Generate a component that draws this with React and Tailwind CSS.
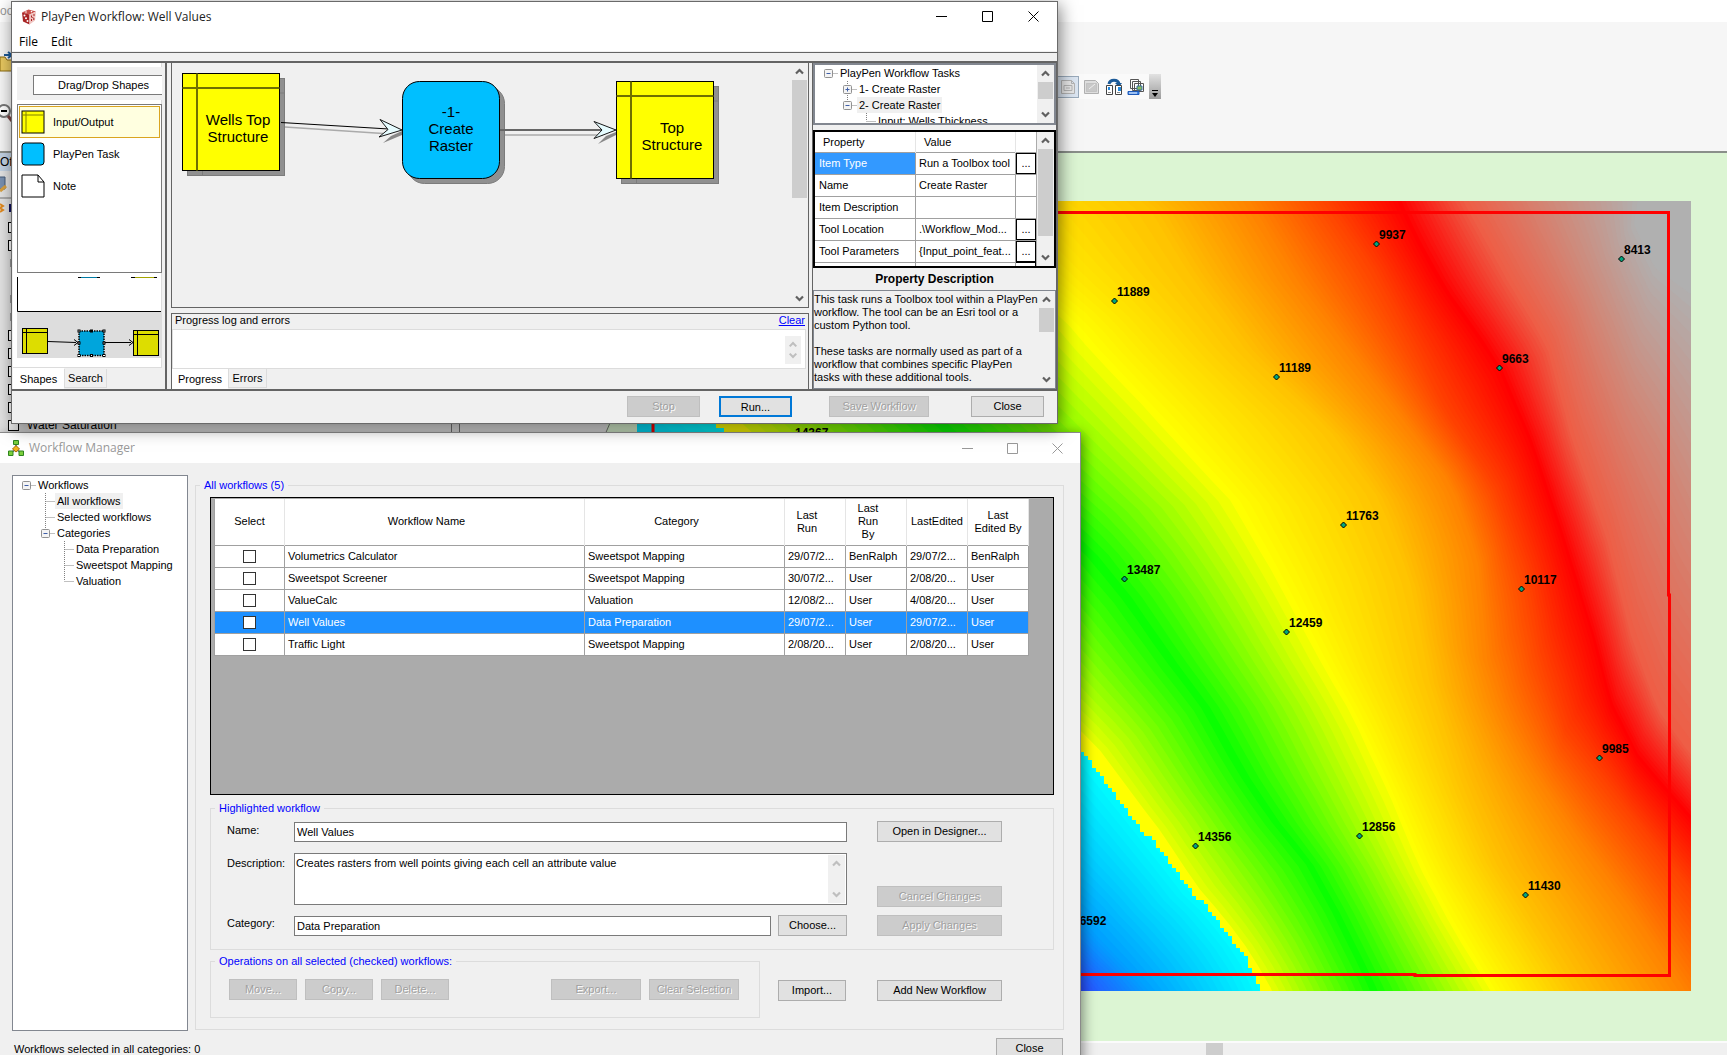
import { useState } from 'react'

/* ---------- shared controls ---------- */

const button = 'h-[21px] border border-[#adadad] bg-[#e1e1e1] leading-[17px] text-black disabled:border-[#bfbfbf] disabled:bg-[#cccccc] disabled:text-[#a0a0a0] disabled:[text-shadow:1px_1px_0_#fff]'

function Button({ className = '', ...props }) {
  return <button type="button" className={`${button} ${className}`} {...props} />
}

function Chevron({ up, muted }) {
  return (
    <svg className="h-[17px] w-full shrink-0" viewBox="0 0 17 17" fill="none" stroke={muted ? '#bfbfbf' : '#606060'} strokeWidth="2.2">
      <path d={up ? 'M5 10.5l3.5-3.5 3.5 3.5' : 'M5 6.5l3.5 3.5 3.5-3.5'} />
    </svg>
  )
}

function ScrollBar({ thumb, muted }) {
  return (
    <div className="flex w-[17px] shrink-0 flex-col justify-between bg-[#f0f0f0]">
      <div>
        <Chevron up muted={muted} />
        {thumb && <div className={`mx-px bg-[#cdcdcd] ${thumb}`} />}
      </div>
      <Chevron muted={muted} />
    </div>
  )
}

function WindowButtons({ color, gap }) {
  return (
    <div className={`flex ${gap}`}>
      <button type="button" aria-label="Minimize">
        <svg className="size-[11px]" viewBox="0 0 11 11" stroke={color} fill="none"><path d="M0 5.5h11" /></svg>
      </button>
      <button type="button" aria-label="Maximize">
        <svg className="size-[11px]" viewBox="0 0 11 11" stroke={color} fill="none"><path d="M.5 .5h10v10h-10z" /></svg>
      </button>
      <button type="button" aria-label="Close window">
        <svg className="size-[11px]" viewBox="0 0 11 11" stroke={color} fill="none"><path d="M.5 .5l10 10M10.5 .5l-10 10" /></svg>
      </button>
    </div>
  )
}

function Tree({ items }) {
  return (
    <ul className="min-w-0 flex-1 overflow-hidden">
      {items.map((item) => {
        const c = 13.5 + 19 * item.depth
        const w = 23 + 19 * item.depth
        return (
          <li key={item.label} className="flex h-4 items-center whitespace-nowrap">
            <svg className="shrink-0" width={w} height="16" viewBox={`0 0 ${w} 16`} fill="none">
              <g stroke="#808080" strokeDasharray="1 1">
                <path d={`M${c} 8.5h10`} />
                {item.depth > 0 && <path d={`M${c} 0v8`} />}
                {item.more && <path d={`M${c} 8v8`} />}
              </g>
              {item.toggle && (
                <>
                  <rect x={c - 4} y="4.5" width="8" height="8" rx="1" fill="#f4f4f4" stroke="#919191" />
                  <path d={`M${c - 2} 8.5h4`} stroke="#3f5fa8" />
                  {item.toggle === '+' && <path d={`M${c} 6.5v4`} stroke="#3f5fa8" />}
                </>
              )}
            </svg>
            <span className={`px-0.5 leading-4 ${item.active ? 'bg-[#f0f0f0]' : ''}`}>{item.label}</span>
          </li>
        )
      })}
    </ul>
  )
}

/* ---------- map ---------- */

// Contours run from the upper left to the lower right, deepest first
const CONTOURS = [
  { color: [42, 80, 255], points: [[600, 700], [900, 850], [1070, 975], [1095, 1010]] },
  { color: [0, 162, 255], points: [[600, 560], [900, 770], [1080, 918], [1150, 992], [1160, 1010]] },
  { color: [0, 255, 255], points: [[600, 330], [713, 424], [880, 572], [1081, 752], [1145, 834], [1196, 901], [1209, 910], [1243, 954], [1262, 996], [1266, 1010]] },
  { color: [255, 255, 0], points: [[600, 329], [713, 423], [880, 571], [1081, 751], [1145, 833], [1190, 901], [1203, 912], [1237, 954], [1261, 996], [1266, 1010]], hard: true },
  { color: [10, 255, 0], points: [[690, 190], [933, 424], [1080, 548], [1124, 601], [1162, 656], [1200, 706], [1238, 773], [1270, 820], [1305, 863], [1332, 912], [1357, 963], [1370, 990], [1378, 1010]] },
  { color: [255, 255, 0], points: [[880, 185], [1060, 315], [1090, 350], [1145, 408], [1188, 455], [1230, 500], [1275, 577], [1317, 655], [1353, 718], [1388, 792], [1420, 868], [1450, 924], [1490, 990], [1502, 1010]] },
  { color: [255, 192, 0], points: [[1110, 180], [1145, 201], [1190, 275], [1250, 355], [1330, 430], [1380, 500], [1410, 580], [1430, 683], [1463, 787], [1495, 862], [1535, 925], [1575, 990], [1588, 1010]] },
  { color: [255, 128, 0], points: [[1238, 180], [1250, 201], [1297, 280], [1347, 347], [1403, 420], [1452, 485], [1478, 560], [1487, 660], [1505, 717], [1530, 765], [1580, 840], [1632, 910], [1685, 990], [1698, 1010]] },
  { color: [255, 64, 0], points: [[1316, 180], [1327, 201], [1370, 263], [1417, 353], [1445, 410], [1495, 485], [1528, 580], [1541, 655], [1565, 730], [1600, 775], [1647, 835], [1700, 900], [1710, 912]] },
  { color: [255, 0, 0], points: [[1388, 180], [1397, 201], [1417, 243], [1443, 290], [1477, 337], [1500, 373], [1530, 443], [1557, 523], [1593, 640], [1610, 705], [1637, 758], [1691, 820], [1710, 842]] },
  { color: [238, 94, 70], points: [[1452, 180], [1463, 201], [1507, 280], [1547, 347], [1572, 440], [1607, 540], [1632, 640], [1658, 710], [1691, 755], [1710, 778]] },
  { color: [208, 136, 120], points: [[1535, 180], [1547, 201], [1590, 300], [1630, 400], [1667, 465], [1691, 515], [1710, 550]] },
  { color: [176, 176, 176], points: [[1640, 180], [1634, 225], [1655, 268], [1710, 308]] },
]

const SAMPLES = 40
const STEPS = 16

function resample(points) {
  const lengths = [0]
  for (let i = 1; i < points.length; i++) {
    lengths.push(lengths[i - 1] + Math.hypot(points[i][0] - points[i - 1][0], points[i][1] - points[i - 1][1]))
  }
  const total = lengths[lengths.length - 1]
  const out = []
  let seg = 1
  for (let s = 0; s <= SAMPLES; s++) {
    const d = (total * s) / SAMPLES
    while (seg < points.length - 1 && lengths[seg] < d) seg++
    const t = (d - lengths[seg - 1]) / (lengths[seg] - lengths[seg - 1])
    out.push([0, 1].map((k) => points[seg - 1][k] + (points[seg][k] - points[seg - 1][k]) * t))
  }
  return out
}

// raster cells are 4px, so the fault edge comes out as stairs
function stairs(points) {
  const out = []
  for (let i = 1; i < points.length; i++) {
    const [x0, y0] = points[i - 1]
    const [x1, y1] = points[i]
    const n = Math.max(1, Math.round((y1 - y0) / 4))
    for (let j = 0; j < n; j++) {
      const x = Math.round((x0 + ((x1 - x0) * j) / n) / 4) * 4
      const y = Math.round((y0 + ((y1 - y0) * j) / n) / 4) * 4
      if (out.length) out.push([x, out[out.length - 1][1]])
      out.push([x, y])
    }
  }
  return out
}

const mix = (a, b, t) => a.map((v, k) => v + (b[k] - v) * t)

function area(line) {
  const first = line[0]
  const last = line[line.length - 1]
  return [...line, [1900, last[1]], [1900, 100], [first[0], 100]]
    .map(([x, y]) => `${Math.round(x * 2) / 2},${Math.round(y * 2) / 2}`)
    .join(' ')
}

function buildBands() {
  const bands = []
  CONTOURS.forEach((contour, i) => {
    if (i === 0) return
    if (contour.hard) {
      bands.push({ fill: 'rgb(255,255,0)', points: area(stairs(CONTOURS[i - 1].points)) })
      return
    }
    const prev = CONTOURS[i - 1]
    const a = resample(prev.points)
    const b = resample(contour.points)
    for (let s = prev.hard ? 2 : 1; s <= STEPS; s++) {
      const t = s / STEPS
      const [r, g, bl] = mix(prev.color, contour.color, t).map(Math.round)
      bands.push({ fill: `rgb(${r},${g},${bl})`, points: area(a.map((p, k) => mix(p, b[k], t))) })
    }
  })
  return bands
}

const BANDS = buildBands()

const WELLS = [
  [792, 442, '14367'], [1114, 301, '11889'], [1376, 244, '9937'], [1621, 259, '8413'],
  [1499, 368, '9663'], [1276, 377, '11189'], [1343, 525, '11763'], [1124, 579, '13487'],
  [1521, 589, '10117'], [1286, 632, '12459'], [1599, 758, '9985'], [1195, 846, '14356'],
  [1359, 836, '12856'], [1525, 895, '11430'], [1070, 930, '16592'],
]

function DepthMap() {
  return (
    <svg className="block h-[790px] w-[1054px] shrink-0" viewBox="637 201 1054 790">
      <rect x="637" y="201" width="1054" height="790" fill="rgb(42,80,255)" />
      {BANDS.map((band, i) => <polygon key={i} points={band.points} fill={band.fill} />)}
      <path d="M653 212.500H1668.500V595H1669.500V975.500H1415V974.500H653Z" fill="none" stroke="#ff0000" strokeWidth="3" />
      {WELLS.map(([x, y, depth]) => (
        <g key={depth}>
          <path d={`M${x - 2.5} ${y}l3-3 3 3-3 3z`} fill="#00a57c" stroke="#000" />
          <text x={x + 3} y={y - 5} className="font-['Liberation_Sans',sans-serif] text-[12px] font-bold">{depth}</text>
        </g>
      ))}
    </svg>
  )
}

function MapToolbar() {
  return (
    <div className="flex h-[25px] items-center gap-1 bg-[#fafafa]">
      <button type="button" aria-label="Fixed zoom out" className="border border-[#9ab] bg-[#dce6f2] p-px">
        <svg className="size-[18px]" viewBox="0 0 18 18" fill="#e8e8e8" stroke="#b4b4b4"><path d="M2.500 2.500h10l3 3v10h-13zM12.500 2.500v3h3" /><path d="M5 7.500h8v5H5zM7 10h4" /></svg>
      </button>
      <button type="button" aria-label="Select extent">
        <svg className="size-[18px]" viewBox="0 0 18 18" fill="#dedede" stroke="#b0b0b0"><path d="M1.500 2.500h11l3 3v10h-14z" /><path d="M3.500 5.500h10v8h-10z" strokeDasharray="1 1" fill="#c8c8c8" /><path d="M6 11l6-5" stroke="#eee" /></svg>
      </button>
      <button type="button" aria-label="Swap layouts">
        <svg className="size-[18px]" viewBox="0 0 18 18" fill="none">
          <path d="M4 6c1-5 9-5 10 0" stroke="#1c5a98" strokeWidth="3" /><path d="M10 5h7l-3 4z" fill="#1c5a98" />
          <path d="M1.500 7.500h6v9h-6zM10.500 7.500h6v9h-6z" fill="#fff" stroke="#444" />
          <path d="M3 9h2v3H3zM13 9h3v4h-3z" fill="#2288dd" /><path d="M3 14.500h3M12 14.500h3" stroke="#888" />
        </svg>
      </button>
      <button type="button" aria-label="Data driven pages">
        <svg className="size-[18px]" viewBox="0 0 18 18" fill="#fff" stroke="#555">
          <path d="M3.500 1.500h8v9h-8zM5.500 3.500h8v9h-8zM7.500 5.500h9v8h-9z" /><path d="M10 8h5v4h-5z" fill="#8abf5a" stroke="#3a6ea5" /><path d="M1 13.500h11v3H1z" fill="#3c84e8" stroke="#1c58b8" /><path d="M3 14v2M5 14v2M7 14v2M9 14v2" stroke="#fff" />
        </svg>
      </button>
      <button type="button" aria-label="Toolbar options" className="h-[25px] w-3 bg-linear-to-b from-[#e2e2e2] to-[#9c9c9c]">
        <svg className="mt-3 w-3" viewBox="0 0 12 10"><path d="M3 2h6v1H3zM3 5h6l-3 4z" fill="#000" /></svg>
      </button>
    </div>
  )
}

const LAYER_ROWS = ['box', 'box', 'bit', '', 'bit', 'bit', 'box', 'box', 'box', 'box', 'box']

function Backdrop() {
  return (
    <div className="flex h-full flex-col bg-[#f6f6f6]">
      <header className="flex h-[153px] shrink-0 flex-col border-b-2 border-[#8a8f8a]">
        <div className="h-[22px] w-full bg-white text-[12px] leading-[22px] text-[#999]">oo</div>
        <div className="flex grow items-center gap-[1045px]">
          <svg className="h-24 w-3 shrink-0" viewBox="0 0 12 96">
            <path d="M0 18h5l2 3h5v11H0z" fill="#e8c860" stroke="#8a6a10" /><path d="M4 16h7M8 13l4 3-4 3" stroke="#1c5a98" fill="none" strokeWidth="2" />
            <circle cx="4" cy="72" r="6" fill="#fff" stroke="#777" strokeWidth="2" /><path d="M1 72h6" stroke="#000" strokeWidth="2" /><path d="M8 77l4 5" stroke="#7a4040" strokeWidth="3" />
          </svg>
          <MapToolbar />
        </div>
      </header>
      <div className="flex min-h-0 grow">
        <aside className="w-[452px] shrink-0 border-r border-[#777] bg-[#e3e3e3]">
          <div className="h-[18px] bg-[#c3d3e4] text-[12px] leading-[18px]">Of</div>
          <svg className="h-[47px] w-3" viewBox="0 0 12 47">
            <path d="M-5 6h10v12h-10z" fill="#7890b0" stroke="#445a78" /><path d="M0 20l6-5" stroke="#d8a040" strokeWidth="3" />
            <path d="M0 27h12" stroke="#777" /><path d="M0 33l3 2-3 2 3 2-3 2" stroke="#e08a20" strokeWidth="2" fill="none" /><path d="M9 33h2v8h-2z" fill="#101060" />
          </svg>
          {LAYER_ROWS.map((kind, i) => (
            <div key={i} className="flex h-[18px] items-center pl-2">
              {kind === 'box' && <span className="size-[11px] border border-black bg-white" />}
              {kind === 'bit' && <span className="ml-0.5 h-2 w-1 bg-[#999]" />}
            </div>
          ))}
          <label className="flex h-[18px] items-center gap-2 pl-2 text-[12px]">
            <input type="checkbox" className="size-[11px] appearance-none border border-black bg-white" />
            Water Saturation
          </label>
        </aside>
        <div className="flex min-w-0 grow flex-col">
          <div className="flex min-h-0 grow bg-[#dcf5d3]">
            <svg className="h-full w-[185px] shrink-0" viewBox="0 0 185 888" preserveAspectRatio="none">
              <path d="M0 0h8v888H0z" fill="#e3e3e3" /><path d="M8 0h190L154 280 120 360H8z" fill="#e3e3e3" /><path d="M7.500 0v888M158 270l-6 14" stroke="#777" />
            </svg>
            <div className="pt-12"><DepthMap /></div>
          </div>
          <div className="flex h-[14px] shrink-0 border-t-2 border-[#fbfbfb] bg-[#f0f0f0] pl-[754px]">
            <div className="w-[17px] bg-[#cdcdcd]" />
          </div>
        </div>
      </div>
    </div>
  )
}

/* ---------- workflow designer ---------- */

function DieIcon() {
  return (
    <svg className="size-4" viewBox="0 0 16 16">
      <path d="M7.500 .5l7.500 2-6.500 3L1 3.500z" fill="#c9504a" />
      <path d="M1 3.500l7.500 2V15.500L2 12.500z" fill="#a82424" />
      <path d="M8.500 5.500L15 2.500l-1 9-5.500 4z" fill="#f0c4c0" />
      <g fill="#fff"><circle cx="5" cy="3" r=".8" /><circle cx="10.500" cy="2.600" r=".8" /><circle cx="3.500" cy="6.500" r="1" /><circle cx="6.500" cy="12" r="1" /><circle cx="5" cy="9.200" r="1" /></g>
      <path d="M10 6.500h1v2h-1zM12.500 5h1v2h-1zM10 10h1v2h-1zM12.300 9h1v2h-1zM11.300 8h1v1h-1z" fill="#a82424" />
    </svg>
  )
}

function StoreShape({ x, y, lines }) {
  return (
    <g>
      <g fill="#909090" stroke="#7c7c7c">
        <rect x={x + 5} y={y + 5} width="97" height="97" />
        <path d={`M${x + 5} ${y + 19.5}h97M${x + 20} ${y + 5}v97`} />
      </g>
      <rect x={x} y={y} width="97" height="97" fill="#ffff00" stroke="#000" />
      <path d={`M${x} ${y + 14.5}h97M${x + 14.5} ${y}v97`} stroke="#707000" strokeWidth="2" />
      {lines.map((line, i) => (
        <text key={line} x={x + 55.5} y={y + 51 + i * 17} textAnchor="middle">{line}</text>
      ))}
    </g>
  )
}

function Diagram() {
  return (
    <svg className="block h-[243px] w-[619px] shrink-0 font-['Liberation_Sans',sans-serif] text-[15px]" viewBox="172 63 619 243">
      <StoreShape x={182.5} y={73.5} lines={['Wells Top', 'Structure']} />
      <rect x="407.500" y="86.500" width="97" height="97" rx="17" fill="#909090" stroke="#7c7c7c" />
      <rect x="402.500" y="81.500" width="97" height="97" rx="17" fill="#00bfff" stroke="#000" />
      {['-1-', 'Create', 'Raster'].map((line, i) => (
        <text key={line} x="451" y={117 + i * 17} textAnchor="middle">{line}</text>
      ))}
      <StoreShape x={616.5} y={81.5} lines={['Top', 'Structure']} />
      <path d="M285 127l98 6.500M505 135h98" stroke="#aaa" strokeWidth="1.500" fill="none" />
      <path d="M402 131v4l-19 8 8-7zM616 132v3l-18 9 8-8z" fill="#888" />
      <path d="M281 122.500l108 6.500" stroke="#000" />
      <path d="M500 130h102" stroke="#666" strokeWidth="2" />
      <path d="M402 130l-22-10.500 8 10-9 7.500zM616 130l-22-8.500 8 8.500-8 8.500z" fill="#e6fcff" stroke="#000" strokeWidth=".9" />
    </svg>
  )
}

function Overview() {
  const handles = [[80, 331], [92.5, 331], [105, 331], [80, 343], [105, 343], [80, 355.5], [92.5, 355.5], [105, 355.5]]
  return (
    <svg className="mt-1 block h-[81px] w-[144px]" viewBox="18 277 144 81">
      <path d="M18 312h144v46H18z" fill="#dddddd" />
      <path d="M18.500 277v34.500H162" fill="none" stroke="#000" />
      <path d="M79 277.500h22M132 277.500h26" stroke="#000" /><path d="M82 277h16" stroke="#00a5dc" strokeWidth="1.500" /><path d="M136 277h19" stroke="#dddd00" strokeWidth="1.500" />
      {[[23.5, 328.5], [134.5, 330.5]].map(([x, y]) => (
        <g key={x} fill="#dddd00" stroke="#000">
          <rect x={x} y={y} width="25" height="25" />
          <path d={`M${x} ${y + 4}h25M${x + 4} ${y}v25`} />
        </g>
      ))}
      <rect x="80" y="331" width="25" height="24.500" fill="#00a5dc" stroke="#000" strokeWidth="1.500" strokeDasharray="1.500 1" />
      <path d="M49 341.500l28 1M106 342.500h26M75 339.500l4 3-4 3M130 339.500l4 3-4 3" fill="none" stroke="#000" />
      {handles.map(([x, y]) => <rect key={`${x}-${y}`} x={x - 1} y={y - 1} width="2" height="2" fill="#fff" stroke="#000" />)}
    </svg>
  )
}

const SHAPES = [
  { label: 'Input/Output', icon: <><rect x="1" y="1" width="22" height="22" fill="#ffff00" /><path d="M1 5h22M5 1v22" stroke="#808000" /></> },
  { label: 'PlayPen Task', icon: <rect x="1" y="1" width="22" height="22" rx="3" fill="#00bfff" /> },
  { label: 'Note', icon: <path d="M1 1h16l6 7v15H1zM17 1v7h6" fill="#fff" /> },
]

const TASKS = [
  { label: 'PlayPen Workflow Tasks', depth: 0, toggle: '-' },
  { label: '1- Create Raster', depth: 1, toggle: '+', more: true },
  { label: '2- Create Raster', depth: 1, toggle: '-', active: true },
  { label: 'Input: Wells Thickness', depth: 2 },
]

const PROPERTIES = [
  ['Item Type', 'Run a Toolbox tool', true],
  ['Name', 'Create Raster', false],
  ['Item Description', '', false],
  ['Tool Location', '.\\Workflow_Mod...', true],
  ['Tool Parameters', '{Input_point_feat...', true],
]

function ShapesPanel() {
  return (
    <section className="flex w-[154px] shrink-0 flex-col border-r-2 border-[#646464]">
      <div className="mr-[3px] h-[305px] border-b border-r border-[#dcdcdc] bg-white pl-1 pt-1">
        <div className="h-[33px] w-[145px] bg-[#f0f0f0] pl-4 pt-2">
          <h2 className="h-5 border border-r-0 border-[#7a7a7a] bg-white pl-6 leading-[18px]">Drag/Drop Shapes</h2>
        </div>
        <ul className="mt-1 h-[169px] w-[145px] border border-[#7a7a7a] p-px">
          {SHAPES.map((shape, i) => (
            <li key={shape.label} className={`flex h-8 items-center gap-2 border px-px pb-px ${i === 0 ? 'border-[#daa520] bg-[#ffffe0]' : 'border-transparent'}`}>
              <svg className="size-6" viewBox="0 0 24 24" stroke="#000">{shape.icon}</svg>
              {shape.label}
            </li>
          ))}
        </ul>
        <Overview />
      </div>
      <div className="flex">
        <button type="button" className="h-[21px] w-[51px] bg-white">Shapes</button>
        <button type="button" className="mt-px h-[19px] w-[43px] border border-t-0 border-[#dcdcdc] leading-4">Search</button>
      </div>
    </section>
  )
}

function PropertyPanel() {
  return (
    <section className="flex w-[245px] shrink-0 flex-col border-x border-[#646464]">
      <div className="flex h-[62px] border-2 border-[#828790] bg-white">
        <Tree items={TASKS} />
        <ScrollBar thumb="h-[17px]" />
      </div>
      <div className="mt-[5px] flex h-[138px] overflow-hidden border-2 border-black bg-[#ababab]">
        <div className="min-w-0 flex-1 overflow-hidden">
          <table className="w-[221px] table-fixed border-collapse bg-white">
            <colgroup><col /><col className="w-[100px]" /><col className="w-5" /></colgroup>
            <thead>
              <tr className="h-5 border-b border-[#a0a0a0] text-left">
                <th className="border-r border-[#e5e5e5] pl-2 font-normal">Property</th>
                <th className="border-r border-[#e5e5e5] pl-2 font-normal">Value</th>
                <th />
              </tr>
            </thead>
            <tbody>
              {PROPERTIES.map(([name, value, more], i) => (
                <tr key={name} className="h-[22px] border-b border-[#a0a0a0]">
                  <td className={`border-r border-[#a0a0a0] pl-1 ${i === 0 ? 'bg-[#3399ff] text-white' : ''}`}>{name}</td>
                  <td className="whitespace-nowrap border-r border-[#a0a0a0] pl-[3px]">{value}</td>
                  <td>{more && <button type="button" aria-label={`Edit ${name}`} className="block h-[21px] w-5 border border-black leading-4">...</button>}</td>
                </tr>
              ))}
              <tr className="h-[22px]"><td className="border-r border-[#a0a0a0]" /><td className="border-r border-[#a0a0a0]" /><td className="border border-black" /></tr>
            </tbody>
          </table>
        </div>
        <ScrollBar thumb="h-[87px]" />
      </div>
      <h2 className="py-[3px] text-center text-[12px] font-bold leading-4">Property Description</h2>
      <div className="flex min-h-0 grow border border-[#828790]">
        <div className="min-w-0 flex-1 whitespace-nowrap py-0.5 leading-[13px]">
          <p>This task runs a Toolbox tool within a PlayPen<br />workflow. The tool can be an Esri tool or a<br />custom Python tool.</p>
          <p className="mt-[13px]">These tasks are normally used as part of a<br />workflow that combines specific PlayPen<br />tasks with these additional tools.</p>
        </div>
        <ScrollBar thumb="h-6" />
      </div>
    </section>
  )
}

function DesignerWindow() {
  return (
    <section className="absolute left-[11px] top-px z-10 flex h-[423px] w-[1047px] flex-col border border-[#6a6a6a] bg-[#f0f0f0] shadow-[2px_4px_16px_rgba(0,0,0,0.5)]">
      <div className="flex h-[30px] shrink-0 items-center justify-between bg-white pb-px pl-[9px] pr-[18px]">
        <h1 className="flex items-center gap-1 font-['Open_Sans',sans-serif] text-[12px] text-[#222]"><DieIcon />PlayPen Workflow: Well Values</h1>
        <WindowButtons color="#000" gap="gap-[35px]" />
      </div>
      <nav className="flex h-[19px] shrink-0 gap-[13px] bg-white pl-[7px] font-['Open_Sans',sans-serif] text-[12px] leading-5">
        <button type="button" className="leading-5">File</button>
        <button type="button" className="leading-5">Edit</button>
      </nav>
      <div className="mt-px h-[9px] shrink-0 border-t border-[#646464]" />
      <div className="flex h-[330px] shrink-0 border-y-2 border-[#646464] pl-px">
        <ShapesPanel />
        <div className="ml-1 mr-[3px] flex min-w-0 grow flex-col">
          <div className="flex h-[245px] justify-between overflow-hidden border-x border-b border-[#646464]">
            <Diagram />
            <ScrollBar thumb="h-[118px]" />
          </div>
          <div className="mt-[5px] flex grow flex-col border border-b-0 border-[#646464]">
            <div className="flex h-[15px] justify-between px-[3px] leading-[13px]">
              <h2>Progress log and errors</h2>
              <a href="#clear" className="text-[#0000ff] underline">Clear</a>
            </div>
            <div className="mr-0.5 flex h-10 justify-end border border-[#dcdcdc] bg-white p-1 pt-[6px]">
              <div className="flex h-7 w-4 flex-col justify-between bg-[#f0f0f0]"><div className="-mb-1"><Chevron up muted /></div><div className="-mt-1"><Chevron muted /></div></div>
            </div>
            <div className="flex">
              <button type="button" className="h-5 w-14 bg-white">Progress</button>
              <button type="button" className="h-[19px] w-[39px] border border-t-0 border-[#dcdcdc] leading-4">Errors</button>
            </div>
          </div>
        </div>
        <PropertyPanel />
      </div>
      <footer className="flex grow items-center justify-end pb-px pr-[13px]">
        <Button disabled className="w-[73px]">Stop</Button>
        <button type="button" className="ml-[19px] h-[21px] w-[73px] border-2 border-[#0078d7] bg-[#e1e1e1] leading-4">Run...</button>
        <Button disabled className="ml-[37px] w-[100px]">Save Workflow</Button>
        <Button className="ml-[42px] w-[73px]">Close</Button>
      </footer>
    </section>
  )
}

/* ---------- workflow manager ---------- */

const WORKFLOW_TREE = [
  { label: 'Workflows', depth: 0, toggle: '-' },
  { label: 'All workflows', depth: 1, more: true, active: true },
  { label: 'Selected workflows', depth: 1, more: true },
  { label: 'Categories', depth: 1, toggle: '-' },
  { label: 'Data Preparation', depth: 2, more: true },
  { label: 'Sweetspot Mapping', depth: 2, more: true },
  { label: 'Valuation', depth: 2 },
]

// sortable columns keep room on the right for the sort arrow
const COLUMNS = [
  { lines: ['Workflow Name'], className: 'pr-4' },
  { lines: ['Category'], className: 'pr-4' },
  { lines: ['Last', 'Run'], className: 'pr-4' },
  { lines: ['Last', 'Run', 'By'], className: 'pr-4' },
  { lines: ['LastEdited'], className: '' },
  { lines: ['Last', 'Edited By'], className: '' },
]

const WORKFLOWS = [
  ['Volumetrics Calculator', 'Sweetspot Mapping', '29/07/2...', 'BenRalph', '29/07/2...', 'BenRalph'],
  ['Sweetspot Screener', 'Sweetspot Mapping', '30/07/2...', 'User', '2/08/20...', 'User'],
  ['ValueCalc', 'Valuation', '12/08/2...', 'User', '4/08/20...', 'User'],
  ['Well Values', 'Data Preparation', '29/07/2...', 'User', '29/07/2...', 'User'],
  ['Traffic Light', 'Sweetspot Mapping', '2/08/20...', 'User', '2/08/20...', 'User'],
]

function ManagerIcon() {
  return (
    <svg className="size-4" viewBox="0 0 16 16">
      <path d="M8 4v5M8 9l-5 4M8 9l5 4" stroke="#4a6a8a" strokeWidth="1.500" />
      <g fill="#7ccf3c" stroke="#2e8420"><path d="M5.500 .5h5v4h-5zM.5 11h4.500v4.500H.5zM11 11h4.500v4.500H11z" /></g>
      <path d="M8 5.500l3.500 3.500L8 12 4.500 9z" fill="#f4b41c" stroke="#a86a08" />
    </svg>
  )
}

function WorkflowTable({ selected, onSelect }) {
  return (
    <div className="h-[298px] border border-black bg-[#ababab] pl-[3px] pt-px">
      <table className="w-[815px] table-fixed border-collapse border-l border-[#a0a0a0] bg-white">
        <colgroup>
          <col className="w-[70px]" /><col className="w-[300px]" /><col className="w-[200px]" />
          <col className="w-[61px]" /><col className="w-[61px]" /><col className="w-[61px]" /><col className="w-[61px]" />
        </colgroup>
        <thead>
          <tr className="h-[46px] border-b border-[#a0a0a0] leading-[13px]">
            <th className="border-r border-[#e5e5e5] font-normal">Select</th>
            {COLUMNS.map(({ lines, className }) => (
              <th key={lines.join(' ')} className={`border-r border-[#e5e5e5] font-normal ${className}`}>
                {lines.map((line) => <span key={line} className="block whitespace-nowrap">{line} </span>)}
              </th>
            ))}
          </tr>
        </thead>
        <tbody>
          {WORKFLOWS.map((row) => (
            <tr
              key={row[0]}
              onClick={() => onSelect(row[0])}
              className={`h-[22px] border-b border-[#a0a0a0] ${row[0] === selected ? 'bg-[#1e90ff] text-white' : ''}`}
            >
              <td className="border-r border-[#a0a0a0] text-center">
                <input type="checkbox" aria-label={`Select ${row[0]}`} className="mx-auto block size-[13px] appearance-none border border-[#333] bg-white" />
              </td>
              {row.map((cell, i) => <td key={i} className="whitespace-nowrap border-r border-[#a0a0a0] pl-[3px]">{cell}</td>)}
            </tr>
          ))}
        </tbody>
      </table>
    </div>
  )
}

const legend = 'px-1 leading-4 text-[#0000ff]'
const field = 'h-5 border border-[#7a7a7a] bg-white px-0.5'

function ManagerWindow() {
  const [selected, setSelected] = useState('Well Values')
  return (
    <section className="absolute left-0 top-[432px] flex h-[640px] w-[1081px] flex-col border border-l-0 border-[#8a8a8a] bg-[#f0f0f0] shadow-[2px_2px_12px_rgba(0,0,0,0.45)]">
      <div className="flex h-[30px] shrink-0 items-center justify-between bg-white pl-2 pr-[17px]">
        <h1 className="flex items-center gap-[5px] font-['Open_Sans',sans-serif] text-[12px] text-[#999]"><ManagerIcon />Workflow Manager</h1>
        <WindowButtons color="#999" gap="gap-[34px]" />
      </div>
      <div className="flex pl-3 pr-4 pt-3">
        <div className="flex h-[556px] w-[176px] shrink-0 border border-[#828790] bg-white pt-px"><Tree items={WORKFLOW_TREE} /></div>
        <fieldset className="ml-[7px] mt-0.5 h-[553px] min-w-0 grow border border-[#dcdcdc] pl-[14px] pr-[9px]">
          <legend className={`${legend} -ml-[10px]`}>All workflows (5)</legend>
          <div className="pt-1">
            <WorkflowTable selected={selected} onSelect={setSelected} />
          </div>
          <fieldset className="mt-[5px] flex h-[150px] border border-[#dcdcdc] pl-4">
            <legend className={`${legend} -ml-3`}>Highlighted workflow</legend>
            <div className="grid w-[620px] grid-cols-[67px_1fr] content-start items-start pt-[6px]">
              <label htmlFor="wf-name">Name:</label>
              <input id="wf-name" className={field} value={selected} readOnly />
              <label htmlFor="wf-desc" className="mt-[13px]">Description:</label>
              <div className="mt-[11px] flex h-[52px] border border-[#7a7a7a] bg-white p-px">
                <textarea id="wf-desc" className="grow resize-none overflow-hidden leading-4" defaultValue="Creates rasters from well points giving each cell an attribute value" />
                <ScrollBar muted />
              </div>
              <label htmlFor="wf-cat" className="mt-[10px]">Category:</label>
              <div className="mt-[10px] flex gap-[7px]">
                <input id="wf-cat" className={`${field} mt-px min-w-0 grow`} defaultValue="Data Preparation" />
                <Button className="w-[69px]">Choose...</Button>
              </div>
            </div>
            <div className="ml-[30px] flex w-[125px] flex-col pt-[5px]">
              <Button>Open in Designer...</Button>
              <Button disabled className="mt-11">Cancel Changes</Button>
              <Button disabled className="mt-2">Apply Changes</Button>
            </div>
          </fieldset>
          <div className="mt-[3px] flex items-end">
            <fieldset className="flex h-[65px] w-[550px] border border-[#dcdcdc] pl-[18px]">
              <legend className={`${legend} -ml-[14px]`}>Operations on all selected (checked) workflows:</legend>
              <div className="flex gap-2 pt-[10px]">
                <Button disabled className="w-[68px]">Move...</Button>
                <Button disabled className="w-[68px]">Copy...</Button>
                <Button disabled className="w-[68px]">Delete...</Button>
                <Button disabled className="ml-[94px] w-[90px]">Export...</Button>
                <Button disabled className="w-[90px]">Clear Selection</Button>
              </div>
            </fieldset>
            <Button className="mb-[17px] ml-[18px] w-[68px]">Import...</Button>
            <Button className="mb-[17px] ml-[31px] w-[125px]">Add New Workflow</Button>
          </div>
        </fieldset>
      </div>
      <footer className="flex items-start justify-between pl-[14px] pr-[17px] pt-[7px]">
        <p className="pt-[3px]">Workflows selected in all categories: 0</p>
        <Button className="w-[67px]">Close</Button>
      </footer>
    </section>
  )
}

export default function App() {
  return (
    <main className="relative h-screen overflow-hidden font-['Liberation_Sans',Arial,sans-serif] text-[11px] leading-4 text-black">
      <Backdrop />
      <DesignerWindow />
      <ManagerWindow />
    </main>
  )
}
